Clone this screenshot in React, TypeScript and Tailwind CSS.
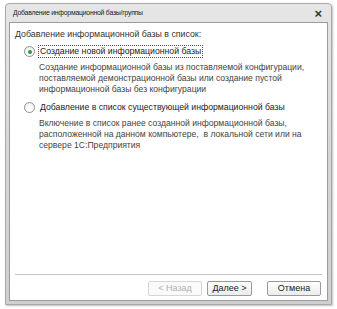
import type { FC } from "react";

const Radio: FC<{ checked?: boolean }> = ({ checked }) => (
  <span className="mt-[1px] flex h-[11px] w-[11px] shrink-0 items-center justify-center rounded-full border border-[#8e8e8e] bg-gradient-to-b from-[#f4f4f4] to-white">
    {checked && <span className="h-[4px] w-[4px] rounded-full bg-[#2f9a3a]" />}
  </span>
);

const Option: FC<{ checked?: boolean; title: string; lines: string[] }> = ({
  checked,
  title,
  lines,
}) => (
  <div className="flex flex-col">
    <div className="flex items-start gap-[3px] pl-[9px] text-[8.7px]">
      <Radio checked={checked} />
      <span
        className={
          checked
            ? "border border-dotted border-[#555] px-[1px] leading-[11px] text-[#222]"
            : "border border-transparent px-[1px] leading-[11px] text-[#222]"
        }
      >
        {title}
      </span>
    </div>
    <div className="mt-[4px] pl-[24px] text-[8.6px] leading-[11px] text-[#444]">
      {lines.map((l) => (
        <div key={l} className="whitespace-pre">
          {l}
        </div>
      ))}
    </div>
  </div>
);

export default function App() {
  return (
    <div
      className="h-[309px] w-[337px] bg-white pl-[5px] pt-[3px]"
      style={{ fontFamily: '"Liberation Sans", Arial, sans-serif' }}
    >
      <div className="flex h-[302px] w-[327px] flex-col rounded-t-[4px] border border-[#a9a9a9] bg-gradient-to-b from-[#e6e6e6] via-[#d6d6d6] to-[#cfcfcf] px-[3px] pb-[3px] shadow-[1px_1px_2px_rgba(0,0,0,0.25)]">
        <div className="flex h-[18px] items-center justify-between pl-[4px] pr-[6px]">
          <span className="text-[6.9px] tracking-[-0.25px] text-[#222]">
            Добавление информационной базы/группы
          </span>
          <span className="text-[13px] font-bold leading-none text-[#333]">×</span>
        </div>
        <div className="flex flex-1 flex-col border border-[#9c9c9c] bg-white px-[5px] pt-[5px]">
          <div className="text-[8.8px] leading-[12px] text-[#333]">
            Добавление информационной базы в список:
          </div>
          <div className="mt-[5px] flex flex-col gap-[6px]">
            <Option
              checked
              title="Создание новой информационной базы"
              lines={[
                "Создание информационной базы из поставляемой конфигурации,",
                "поставляемой демонстрационной базы или создание пустой",
                "информационной базы без конфигурации",
              ]}
            />
            <Option
              title="Добавление в список существующей информационной базы"
              lines={[
                "Включение в список ранее созданной информационной базы,",
                "расположенной на данном компьютере,  в локальной сети или на",
                "сервере 1С:Предприятия",
              ]}
            />
          </div>
          <div className="mt-auto border-t border-[#c6c6c6] pb-[4px] pt-[6px]">
            <div className="flex justify-end gap-[5px] pr-[1px] text-[9px]">
              <button className="h-[15px] w-[54px] rounded-[2px] border border-[#d6d6d6] bg-[#fafafa] text-[#b0b0b0]">
                &lt; Назад
              </button>
              <button className="h-[15px] w-[45px] rounded-[2px] border border-[#9a9a9a] bg-gradient-to-b from-white to-[#ececec] text-[#222]">
                Далее &gt;
              </button>
              <button className="ml-[10px] h-[15px] w-[54px] rounded-[2px] border border-[#9a9a9a] bg-gradient-to-b from-white to-[#ececec] text-[#222]">
                Отмена
              </button>
            </div>
          </div>
        </div>
      </div>
    </div>
  );
}
